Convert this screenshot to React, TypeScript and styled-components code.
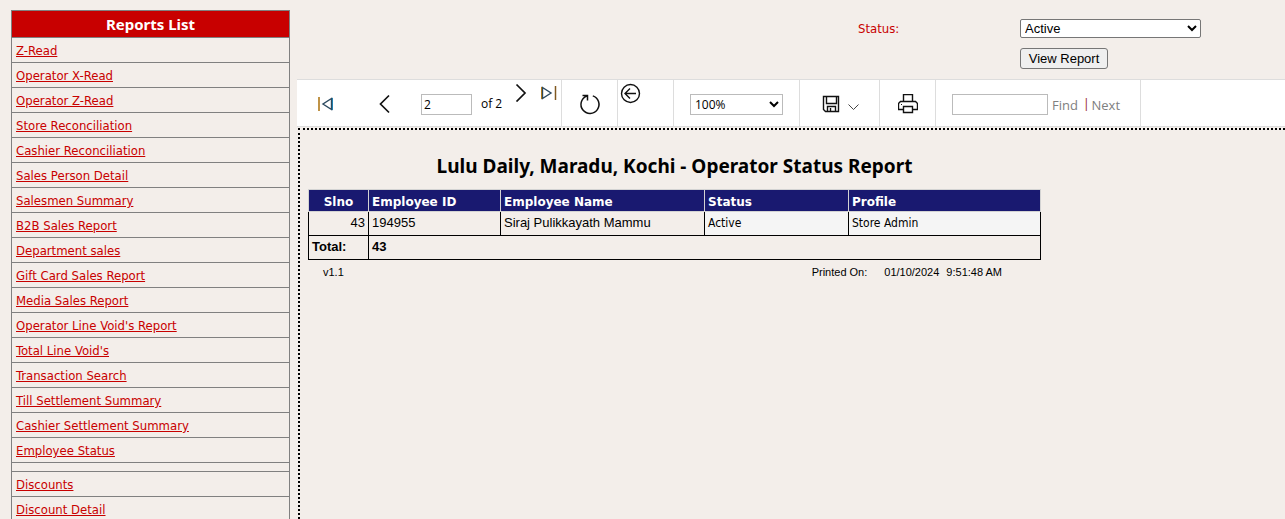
import React from "react";
import styled, { createGlobalStyle } from "styled-components";

const tahoma = `Tahoma, "DejaVu Sans Condensed", "Noto Sans", sans-serif`;
const tahomaBold = `Tahoma, "Noto Sans", sans-serif`;
const verdana = `Verdana, "DejaVu Sans", sans-serif`;
const segoe = `"Segoe UI", "Open Sans", "Noto Sans", sans-serif`;
const arial = `Arial, "Liberation Sans", sans-serif`;

const GlobalStyle = createGlobalStyle`
  * { box-sizing: border-box; }
  body { margin: 0; background: #f3eeea; color: #000; font-family: ${arial}; }
`;

const Page = styled.div`
  display: flex;
  gap: 7px;
  height: 100vh;
  overflow: hidden;
`;

const Sidebar = styled.nav`
  flex: none;
  width: 290px;
  padding: 10px 0 0 11px;
`;

const ReportsTable = styled.table`
  width: 100%;
  border-collapse: collapse;
  font: 13px/16px ${tahoma};
`;

const ReportsHeading = styled.th`
  height: 27px;
  padding: 0;
  border: 1px solid #808080;
  background: #c80000;
  color: #fff;
  font: bold 15px/20px ${tahomaBold};
`;

const ReportCell = styled.td<{ $spacer?: boolean }>`
  height: ${(p) => (p.$spacer ? 9 : 25)}px;
  padding: ${(p) => (p.$spacer ? "0" : "2px 4px 0")};
  border: 1px solid #808080;
`;

const ReportLink = styled.a`
  color: #c80000;
  text-decoration: underline;
`;

const Main = styled.main`
  flex: 1;
  min-width: 0;
  display: flex;
  flex-direction: column;
`;

const Parameters = styled.form`
  flex: none;
  display: grid;
  grid-template-columns: 162px 181px;
  grid-template-rows: 19px 21px;
  row-gap: 10px;
  justify-content: end;
  padding: 19px 84px 10px 0;
`;

const ParameterLabel = styled.label`
  color: #c80000;
  font: 13px/20px ${tahoma};
`;

const StatusSelect = styled.select`
  width: 100%;
  height: 19px;
  padding: 0;
  border: 1px solid #767676;
  border-radius: 2px;
  background: #fff;
  color: #000;
  font: 13px ${arial};
`;

const ViewButton = styled.button`
  grid-column: 2;
  justify-self: start;
  width: 88px;
  height: 21px;
  padding: 0;
  border: 1px solid #767676;
  border-radius: 3px;
  background: #efefef;
  color: #000;
  font: 13px ${arial};
  white-space: nowrap;
`;

const Toolbar = styled.div`
  flex: none;
  display: flex;
  height: 48px;
  margin-bottom: 1px;
  border-top: 1px solid #ddd;
  border-bottom: 1px solid #ddd;
  background: #fff;
  font: 12px/20px ${segoe};
`;

const Group = styled.div<{ $width: number; $pad?: number; $top?: boolean }>`
  flex: none;
  display: flex;
  align-items: ${(p) => (p.$top ? "flex-start" : "center")};
  width: ${(p) => p.$width}px;
  padding: ${(p) => (p.$top ? 3 : 2)}px 0 0 ${(p) => p.$pad ?? 0}px;
  border-right: 1px solid #ddd;
`;

const PagerStart = styled.div`
  display: flex;
  align-items: center;
  gap: 44px;
`;

const RaisedPair = styled.div`
  align-self: flex-start;
  display: flex;
  gap: 12px;
  margin-left: 7px;
`;

const IconButton = styled.button`
  display: flex;
  padding: 0;
  border: 0;
  background: none;
  color: #111;
  svg { display: block; fill: none; stroke: currentColor; }
`;

const PageInput = styled.input`
  width: 51px;
  height: 21px;
  margin: 0 9px 0 26px;
  padding: 0 2px;
  border: 1px solid #bbb;
  background: #fff;
  color: #000;
  font: 12px ${segoe};
`;

const PageCount = styled.span`
  width: 23px;
  white-space: nowrap;
`;

const ZoomSelect = styled.select`
  width: 93px;
  height: 21px;
  padding: 0;
  border: 1px solid #bbb;
  border-radius: 0;
  background: #fff;
  color: #000;
  font: 12px ${segoe};
`;

const FindInput = styled.input`
  width: 96px;
  height: 21px;
  margin-right: 4px;
  padding: 0 2px;
  border: 1px solid #bbb;
  background: #fff;
`;

const FindLink = styled.a`
  padding-top: 1px;
  color: #808080;
  font-size: 13px;
  text-decoration: none;
`;

const Divider = styled.span`
  margin: 0 2px 0 5px;
  color: #901010;
`;

const Report = styled.section`
  flex: 1;
  margin-left: 1px;
  padding: 24px 0 0 8px;
  border-top: 2px dotted #000;
  border-left: 2px dotted #000;
`;

const ReportBody = styled.div`
  max-width: 733px;
`;

const Title = styled.h1`
  margin: 0 0 11px;
  font: bold 19px/24px ${tahomaBold};
  text-align: center;
`;

const DataTable = styled.table`
  width: 100%;
  border-collapse: collapse;
  table-layout: fixed;
`;

const HeadCell = styled.th<{ $center?: boolean; $width?: number }>`
  width: ${(p) => (p.$width ? `${p.$width}px` : "auto")};
  height: 22px;
  padding: 2px 3px 0;
  border: 1px solid #d3d3d3;
  background: #191970;
  color: #fff;
  font: bold 12px/18px ${verdana};
  text-align: ${(p) => (p.$center ? "center" : "left")};
`;

const Cell = styled.td<{ $right?: boolean; $light?: boolean; $bold?: boolean }>`
  height: 24px;
  padding: 2px 3px;
  border: 1px solid #000;
  background: ${(p) => (p.$light ? "#f5f5f5" : "transparent")};
  font: ${(p) => (p.$light ? `12px/18px ${tahoma}` : `13px/18px ${arial}`)};
  font-weight: ${(p) => (p.$bold ? "bold" : "normal")};
  text-align: ${(p) => (p.$right ? "right" : "left")};
  vertical-align: top;
`;

const Footer = styled.footer`
  display: flex;
  justify-content: space-between;
  padding: 5px 39px 0 15px;
  font: 11px/14px ${arial};
`;

const Printed = styled.div`
  display: flex;
  span:first-child { margin-right: 17px; }
  span:last-child { margin-left: 7px; }
`;

const reports = [
  "Z-Read", "Operator X-Read", "Operator Z-Read", "Store Reconciliation",
  "Cashier Reconciliation", "Sales Person Detail", "Salesmen Summary",
  "B2B Sales Report", "Department sales", "Gift Card Sales Report",
  "Media Sales Report", "Operator Line Void's Report", "Total Line Void's",
  "Transaction Search", "Till Settlement Summary", "Cashier Settlement Summary",
  "Employee Status", "", "Discounts", "Discount Detail",
];

export default function App() {
  return (
    <>
      <GlobalStyle />
      <Page>
        <Sidebar aria-label="Reports">
          <ReportsTable>
            <thead><tr><ReportsHeading>Reports List</ReportsHeading></tr></thead>
            <tbody>
              {reports.map((name, i) => (
                <tr key={i}>
                  <ReportCell $spacer={!name}>
                    {name && <ReportLink href="#">{name}</ReportLink>}
                  </ReportCell>
                </tr>
              ))}
            </tbody>
          </ReportsTable>
        </Sidebar>
        <Main>
          <Parameters onSubmit={(e) => e.preventDefault()}>
            <ParameterLabel htmlFor="status">Status:</ParameterLabel>
            <StatusSelect id="status"><option>Active</option></StatusSelect>
            <ViewButton type="submit">View Report</ViewButton>
          </Parameters>
          <Toolbar role="toolbar">
            <Group $width={265} $pad={20}>
              <PagerStart>
                <IconButton aria-label="First page">
                  <svg width="18" height="18" viewBox="0 0 18 18">
                    <path d="M2 2v14" stroke="#b07818" strokeWidth="1.6" />
                    <path d="M14.500 3.500v11L6 9z" stroke="#2c4a60" strokeWidth="1.4" />
                    <path d="M15.500 3v12" stroke="#2080b0" />
                  </svg>
                </IconButton>
                <IconButton aria-label="Previous page">
                  <svg width="16" height="20" viewBox="0 0 16 20">
                    <path d="M10 1.500L1.500 10l8.500 8.500" strokeWidth="1.700" />
                  </svg>
                </IconButton>
              </PagerStart>
              <PageInput aria-label="Current page" defaultValue="2" />
              <PageCount>of 2</PageCount>
              <RaisedPair>
                <IconButton aria-label="Next page">
                  <svg width="16" height="20" viewBox="0 0 16 20">
                    <path d="M5.500 2.500L14 11l-8.500 8.500" strokeWidth="1.700" />
                  </svg>
                </IconButton>
                <IconButton aria-label="Last page">
                  <svg width="18" height="20" viewBox="0 0 18 20">
                    <path d="M3.500 5.500v11L12 11z" stroke="#2c4a60" strokeWidth="1.4" />
                    <path d="M2.500 5v12" stroke="#b07818" />
                    <path d="M16.500 4v14" stroke="#805820" strokeWidth="1.500" />
                  </svg>
                </IconButton>
              </RaisedPair>
            </Group>
            <Group $width={56} $pad={17}>
              <IconButton aria-label="Refresh">
                <svg width="22" height="22" viewBox="0 0 22 22">
                  <path d="M13.800 2.900a9 9 0 1 1-6.200.2M3.500 2.500h5v5" strokeWidth="1.500" />
                </svg>
              </IconButton>
            </Group>
            <Group $width={56} $pad={2} $top>
              <IconButton aria-label="Back to parent report">
                <svg width="21" height="21" viewBox="0 0 21 21">
                  <circle cx="10.500" cy="10.500" r="9" strokeWidth="1.4" />
                  <path d="M16 10.500H5M10 5.500l-5 5 5 5" strokeWidth="1.4" />
                </svg>
              </IconButton>
            </Group>
            <Group $width={126} $pad={16}>
              <ZoomSelect aria-label="Zoom"><option>100%</option></ZoomSelect>
            </Group>
            <Group $width={80} $pad={22}>
              <IconButton aria-label="Export">
                <svg width="38" height="18" viewBox="0 0 38 18">
                  <path d="M1.500 1.500h15v15h-13l-2-2zM4.500 1.500v7h10v-7M5.500 16.500v-5h8v5M8.500 13v3.500" strokeWidth="1.4" />
                  <path d="M26.500 9.500l5 5 5-5" stroke="#444" />
                </svg>
              </IconButton>
            </Group>
            <Group $width={56} $pad={18}>
              <IconButton aria-label="Print">
                <svg width="20" height="20" viewBox="0 0 20 20">
                  <path d="M5.500 7.500v-7h9v7M5.500 15.500h-5v-6l2-2h15l2 2v6h-5M5.500 12.500h9v6h-9z" strokeWidth="1.4" />
                  <path d="M3 10.500h1" />
                </svg>
              </IconButton>
            </Group>
            <Group $width={205} $pad={16}>
              <FindInput aria-label="Find text" />
              <FindLink href="#">Find</FindLink>
              <Divider>|</Divider>
              <FindLink href="#">Next</FindLink>
            </Group>
          </Toolbar>
          <Report>
            <ReportBody>
              <Title>Lulu Daily, Maradu, Kochi - Operator Status Report</Title>
              <DataTable>
                <thead>
                  <tr>
                    <HeadCell $width={60} $center>Slno</HeadCell>
                    <HeadCell $width={132}>Employee ID</HeadCell>
                    <HeadCell $width={204}>Employee Name</HeadCell>
                    <HeadCell $width={144}>Status</HeadCell>
                    <HeadCell>Profile</HeadCell>
                  </tr>
                </thead>
                <tbody>
                  <tr>
                    <Cell $right>43</Cell>
                    <Cell>194955</Cell>
                    <Cell>Siraj Pulikkayath Mammu</Cell>
                    <Cell $light>Active</Cell>
                    <Cell $light>Store Admin</Cell>
                  </tr>
                  <tr>
                    <Cell $bold>Total:</Cell>
                    <Cell $bold colSpan={4}>43</Cell>
                  </tr>
                </tbody>
              </DataTable>
              <Footer>
                <span>v1.1</span>
                <Printed>
                  <span>Printed On:</span>
                  <span>01/10/2024</span>
                  <span>9:51:48 AM</span>
                </Printed>
              </Footer>
            </ReportBody>
          </Report>
        </Main>
      </Page>
    </>
  );
}
